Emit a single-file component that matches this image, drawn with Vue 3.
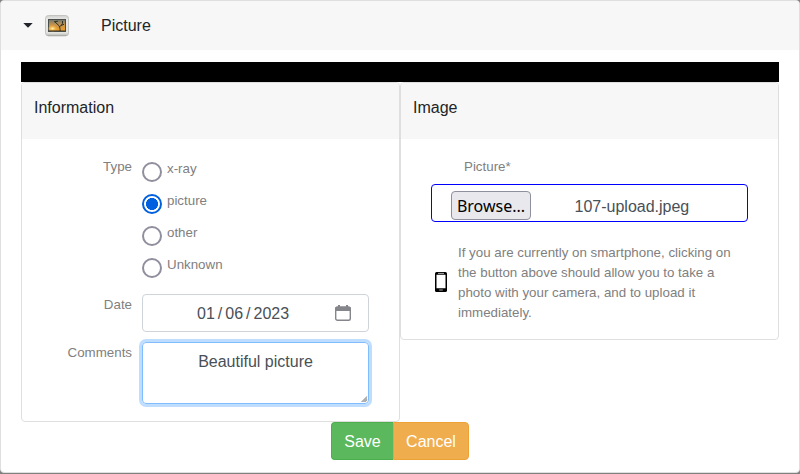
<script setup>
import { ref } from 'vue'

const types = ['x-ray', 'picture', 'other', 'Unknown']
const selected = ref('picture')
</script>

<template>
  <main class="page">
    <section class="panel">
      <header class="panel-head">
        <svg class="caret" width="10" height="5" viewBox="0 0 10 5"><path d="M.3 0h9.4L5 4.8z" fill="#212529" /></svg>
        <svg class="picture-icon" width="24" height="22" viewBox="0 0 24 22">
          <defs>
            <linearGradient id="frame" x1="0" y1="0" x2="0" y2="1">
              <stop offset="0" stop-color="#d0d1cd" />
              <stop offset=".2" stop-color="#e9eae7" />
              <stop offset=".85" stop-color="#e3e4e0" />
              <stop offset="1" stop-color="#b4b5b1" />
            </linearGradient>
            <linearGradient id="sky" x1="0" y1="0" x2="0" y2="1">
              <stop offset="0" stop-color="#77796c" />
              <stop offset=".45" stop-color="#c9954a" />
              <stop offset="1" stop-color="#f0a027" />
            </linearGradient>
            <radialGradient id="sun">
              <stop offset="0" stop-color="#fff5b0" />
              <stop offset="1" stop-color="#ffb536" stop-opacity="0" />
            </radialGradient>
          </defs>
          <rect x=".5" y=".5" width="23" height="20.4" rx="3" fill="url(#frame)" stroke="#c3c4c0" />
          <path d="M2.5 20.5h19" stroke="#adaeaa" />
          <rect x="3" y="4" width="18" height="13" fill="#4a4e4b" />
          <rect x="4" y="5" width="16" height="11" fill="url(#sky)" />
          <ellipse cx="7.5" cy="13.5" rx="5" ry="3.5" fill="url(#sun)" />
          <path d="M4 15.7h16" stroke="#4b3d24" stroke-width=".7" />
          <path d="M15 16c.3-2.2-.2-3.6-1-5.3L10 7M14.5 12l3-3.2V6M16 10.5l3-1.2M9 6.8l4-.6" fill="none" stroke="#30332c" />
        </svg>
        <span>Picture</span>
      </header>
      <div class="panel-body">
        <div class="strip"></div>
        <div class="columns">
          <section class="card">
            <h2>Information</h2>
            <form class="info">
              <div class="field types">
                <span class="label">Type</span>
                <div class="options">
                  <label v-for="type in types" :key="type" class="option">
                    <input v-model="selected" type="radio" name="type" :value="type" />
                    <span>{{ type }}</span>
                  </label>
                </div>
              </div>
              <div class="field date">
                <span class="label">Date</span>
                <div class="control date-control">
                  <span class="date-value"><span>01</span><span>/</span><span>06</span><span>/</span><span>2023</span></span>
                  <svg width="16" height="16" viewBox="0 0 16 16">
                    <path d="M4 0v3M12 0v3" stroke="#85868b" stroke-width="2" />
                    <path d="M0 6V3.5Q0 1.5 2 1.5h12q2 0 2 2V6z" fill="#85868b" />
                    <rect x=".7" y="2.3" width="14.6" height="13" rx="1.8" fill="none" stroke="#85868b" stroke-width="1.4" />
                  </svg>
                </div>
              </div>
              <div class="field">
                <span class="label">Comments</span>
                <div class="control comments">
                  Beautiful picture
                  <svg class="grip" width="7" height="7" viewBox="0 0 7 7"><path d="M0 6 6 0v4.5L4.5 6z" fill="#b5b5b8" /><path d="M.5 6 6 .5M3.5 6 6 3.5" stroke="#98989c" stroke-width=".7" /></svg>
                </div>
              </div>
            </form>
          </section>
          <section class="card">
            <h2>Image</h2>
            <div class="upload">
              <div class="upload-label">Picture*</div>
              <div class="file">
                <button type="button" class="browse">Browse...</button>
                <span class="filename">107-upload.jpeg</span>
              </div>
              <div class="hint">
                <svg width="12" height="20" viewBox="0 0 12 20">
                  <rect width="12" height="20" rx="1.6" fill="#000" />
                  <path d="M1.5 2.8h9v13.5h-9z" fill="#fff" />
                  <path d="M3 1.4h6M4.2 18h3.6" stroke="#aaa" />
                </svg>
                <p>If you are currently on smartphone, clicking on the button above should allow you to take a photo with your camera, and to upload it immediately.</p>
              </div>
            </div>
          </section>
        </div>
        <div class="actions">
          <button type="button" class="save">Save</button><button type="button" class="cancel">Cancel</button>
        </div>
      </div>
    </section>
  </main>
</template>

<style>
body {
  margin: 0;
  overflow: hidden;
  background: #808080;
}
</style>

<style scoped>
* {
  box-sizing: border-box;
}
.page {
  height: 474px;
  font: 16px/24px "Liberation Sans", sans-serif;
  color: #212529;
}
.panel {
  height: 473px;
  border: 1px solid #dfdfdf;
  border-radius: 4px;
  background: #fff;
  overflow: hidden;
}
.panel-head {
  display: flex;
  align-items: center;
  height: 49px;
  padding-left: 22px;
  background: #f7f7f7;
}
.picture-icon {
  margin: 0 32px 0 12px;
}
.panel-body {
  padding: 12px 20px;
}
.strip {
  height: 20px;
  background: #000;
}
.columns {
  display: flex;
  align-items: flex-start;
  background: #fff;
}
.card {
  width: 379px;
  border: 1px solid #dfdfdf;
  border-radius: 4px;
  overflow: hidden;
}
h2 {
  height: 56px;
  margin: 0;
  padding: 13px 12px 0;
  background: #f7f7f7;
  font-size: 16px;
  font-weight: 400;
  line-height: 24px;
}
.info {
  height: 282px;
  padding: 17px 30px 0 20px;
}
.field {
  display: flex;
}
.label {
  width: 90px;
  margin-right: 10px;
  padding-top: 1px;
  text-align: right;
}
.label,
.option,
.upload-label,
.hint {
  color: #808080;
  font-size: 13.333px;
  line-height: 20px;
}
.types {
  height: 138px;
}
.option {
  display: flex;
  gap: 5px;
  height: 32px;
  padding-top: 3px;
}
.option input {
  appearance: none;
  width: 20px;
  height: 20px;
  margin: 3px 0 0;
  border: 2px solid #8f8f9d;
  border-radius: 50%;
  background: #fff;
}
.option input:checked {
  border-color: #0060df;
  background: radial-gradient(circle, #0060df 5.7px, #fff 6.3px);
}
.date {
  height: 48px;
}
.control {
  width: 227px;
  border: 1px solid #ced4da;
  border-radius: 4px;
  color: #495057;
}
.date-control {
  display: flex;
  align-items: center;
  height: 38px;
  padding: 0 17px 0 54px;
}
.date-value {
  display: flex;
  gap: 3px;
  flex: 1;
  padding-top: 2px;
}
.comments {
  position: relative;
  height: 62px;
  padding-top: 7px;
  text-align: center;
  border-color: #80bdff;
  box-shadow: 0 0 0 3px #bfdeff;
}
.grip {
  position: absolute;
  right: 0;
  bottom: 0;
}
.upload {
  height: 200px;
  padding: 18px 30px 0;
}
.upload-label {
  padding: 0 0 7px 33px;
}
.file {
  display: flex;
  height: 38px;
  padding: 6px 19px;
  border: 1px solid #0000ff;
  border-radius: 4px;
  color: #495057;
}
button {
  margin: 0;
  font-size: 16px;
}
.browse {
  width: 80px;
  height: 29px;
  padding: 2px 0 0;
  border: 1px solid #8f8f9d;
  border-radius: 4px;
  background: #e9e9ed;
  color: #000;
  font-family: "Noto Sans", sans-serif;
  line-height: 25px;
}
.filename {
  padding: 4px 0 0 43.5px;
}
.hint {
  display: flex;
  align-items: center;
  gap: 11px;
  padding: 20px 0 0 4px;
}
.hint svg {
  margin-bottom: 1px;
}
.hint p {
  width: 280px;
  margin: 0;
  padding-top: 1px;
}
.actions {
  display: flex;
  justify-content: center;
}
.actions button {
  height: 38px;
  padding: 2px 0 0;
  border: 1px solid #4cae4c;
  background: #5cb85c;
  color: #fff;
  font-family: inherit;
}
.actions .save {
  width: 62px;
  border-right: 0;
  border-radius: 4px 0 0 4px;
}
.actions .cancel {
  width: 76px;
  border-color: #eea236;
  border-radius: 0 4px 4px 0;
  background: #f0ad4e;
}
</style>
